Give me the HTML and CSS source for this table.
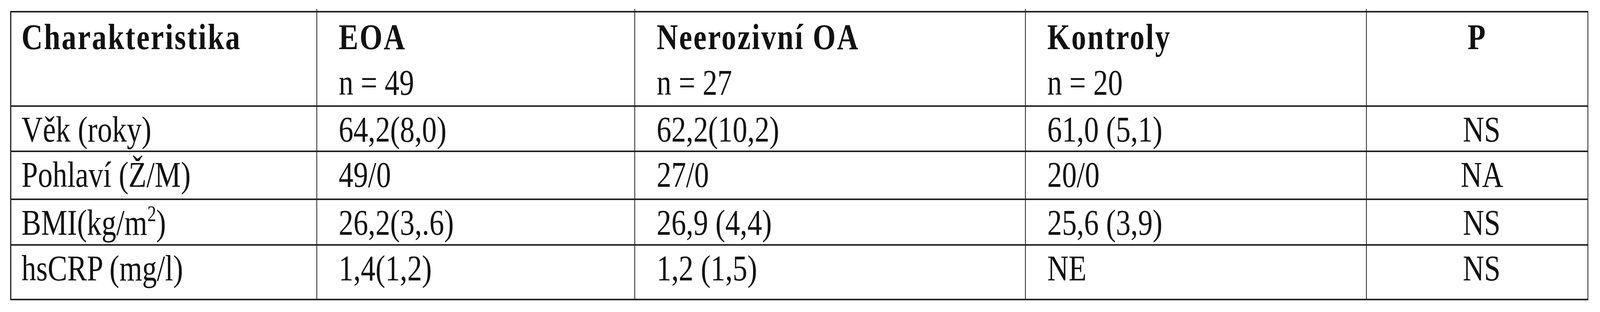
FILE: index.html
```html
<!DOCTYPE html>
<html lang="cs">
<head>
<meta charset="utf-8">
<title>Charakteristika souboru</title>
<link rel="stylesheet" href="styles.css">
</head>
<body>
<div class="page">
  <table class="data">
    <colgroup>
      <col class="c1">
      <col class="c2">
      <col class="c3">
      <col class="c4">
      <col class="c5">
    </colgroup>
    <thead>
      <tr class="head-row">
        <th class="first"><span class="title">Charakteristika</span></th>
        <th><span class="title">EOA</span><span class="count">n = 49</span></th>
        <th><span class="title">Neerozivní OA</span><span class="count">n = 27</span></th>
        <th><span class="title">Kontroly</span><span class="count">n = 20</span></th>
        <th class="center"><span class="title">P</span></th>
      </tr>
    </thead>
    <tbody>
      <tr class="r1">
        <td class="first"><span class="txt">Věk (roky)</span></td>
        <td><span class="txt">64,2(8,0)</span></td>
        <td><span class="txt">62,2(10,2)</span></td>
        <td><span class="txt">61,0 (5,1)</span></td>
        <td class="center"><span class="txt">NS</span></td>
      </tr>
      <tr class="r2">
        <td class="first"><span class="txt">Pohlaví (Ž/M)</span></td>
        <td><span class="txt">49/0</span></td>
        <td><span class="txt">27/0</span></td>
        <td><span class="txt">20/0</span></td>
        <td class="center"><span class="txt">NA</span></td>
      </tr>
      <tr class="r3">
        <td class="first"><span class="txt">BMI(kg/m<sup class="sq">2</sup>)</span></td>
        <td><span class="txt">26,2(3,.6)</span></td>
        <td><span class="txt">26,9 (4,4)</span></td>
        <td><span class="txt">25,6 (3,9)</span></td>
        <td class="center"><span class="txt">NS</span></td>
      </tr>
      <tr class="r4">
        <td class="first"><span class="txt">hsCRP (mg/l)</span></td>
        <td><span class="txt">1,4(1,2)</span></td>
        <td><span class="txt">1,2 (1,5)</span></td>
        <td><span class="txt">NE</span></td>
        <td class="center"><span class="txt">NS</span></td>
      </tr>
    </tbody>
  </table>
</div>
</body>
</html>
```

FILE: styles.css
```css
html, body {
  margin: 0;
  padding: 0;
  background: #ffffff;
}

body {
  font-family: "Liberation Serif", "Times New Roman", serif;
  color: #111111;
}

.page {
  padding: 28px 0 0 26px;
}

.data {
  border-collapse: collapse;
  table-layout: fixed;
  width: 4040px;
  font-size: 94px;
  border-top: 4px solid #222222;
  border-bottom: 4px solid #222222;
  border-left: 3px solid #222222;
  border-right: 2px solid #222222;
}

.c1 { width: 783px; }
.c2 { width: 814px; }
.c3 { width: 1000px; }
.c4 { width: 873px; }
.c5 { width: 567px; }

.data th,
.data td {
  border-left: 2px solid #222222;
  border-right: 2px solid #222222;
  border-top: 4px solid #222222;
  border-bottom: 4px solid #222222;
  vertical-align: top;
  text-align: left;
  padding: 0 0 0 55px;
  white-space: nowrap;
}

.data .first {
  padding-left: 26px;
  border-left: 3px solid #222222;
}

.data .center {
  text-align: center;
  padding-left: 0;
}

.data td.center {
  padding-left: 24px;
}

.data th {
  font-weight: normal;
  line-height: 117px;
  padding-top: 4px;
  position: relative;
}

.data th + th::before {
  content: "";
  position: absolute;
  top: -9px;
  left: -2px;
  width: 2px;
  height: 6px;
  background: #222222;
}

/* glyphs of the scanned typeface are narrower than Liberation Serif */
.title,
.count {
  display: block;
  transform: scaleX(0.8011);
  transform-origin: 0 0;
}

.center .title {
  transform-origin: 50% 0;
}

.title {
  font-weight: bold;
  letter-spacing: 4px;
}

.txt {
  display: inline-block;
  transform: scaleX(0.8011);
  transform-origin: 0 0;
}

.center .txt {
  transform-origin: 50% 0;
}

.data td {
  line-height: 108px;
  padding-top: 3px;
}

.head-row { height: 239px; }
.r1 { height: 116px; }
.r2 { height: 123px; }
.r3 { height: 117px; }
.r4 { height: 140px; }

.sq {
  font-size: 0.6em;
  line-height: 0;
  vertical-align: 0.62em;
}
```
